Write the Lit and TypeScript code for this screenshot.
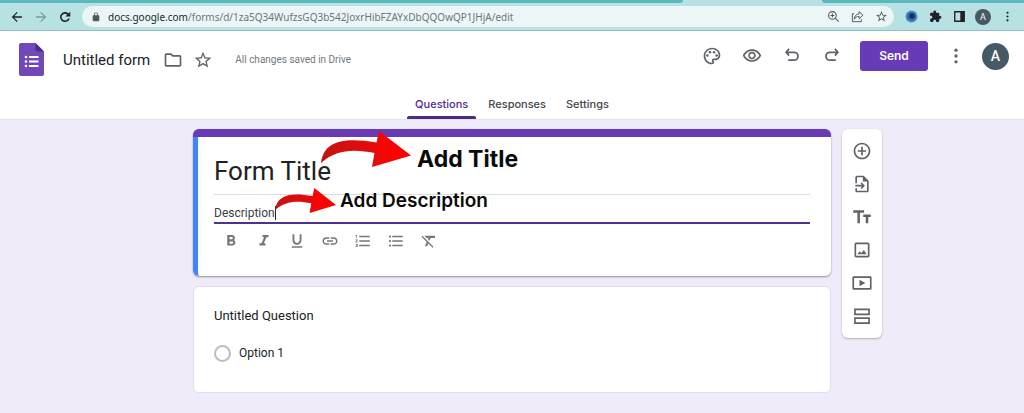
import { LitElement, html, css, svg } from "lit";
import { customElement, property } from "lit/decorators.js";

const dots = svg`<circle cx="12" cy="5" r="2"/><circle cx="12" cy="12" r="2"/><circle cx="12" cy="19" r="2"/>`;
const starPath = svg`<path d="M22 9.24l-7.19-.62L12 2 9.19 8.63 2 9.24l5.46 4.73L5.82 21 12 17.27 18.18 21l-1.63-7.03L22 9.24zM12 15.4l-3.76 2.27 1-4.28-3.32-2.88 4.38-.38L12 6.1l1.71 4.04 4.38.38-3.32 2.88 1 4.28L12 15.4z"/>`;

const glyphs: Record<string, unknown> = {
  back: svg`<path d="M20.500 10.700H7.200l5.900-5.900L11.700 3.400 3 12l8.700 8.600 1.400-1.400-5.900-5.900h13.300z"/>`,
  forward: svg`<path d="M3.500 10.900h13.300l-5.900-5.900 1.400-1.400 8.700 8.400-8.700 8.600-1.400-1.400 5.900-5.900H3.500z"/>`,
  reload: svg`<path d="M18 6A8.500 8.500 0 1 0 20.200 14.500h-2.900A5.800 5.800 0 1 1 16 8l-3.200 3.200H21V3z"/>`,
  lock: svg`<path d="M18 8h-1V6c0-2.760-2.240-5-5-5S7 3.240 7 6v2H6c-1.100 0-2 .9-2 2v10c0 1.100.9 2 2 2h12c1.100 0 2-.9 2-2V10c0-1.100-.9-2-2-2zM9 6c0-1.660 1.340-3 3-3s3 1.340 3 3v2H9V6z"/>`,
  zoom: svg`<g fill="none" stroke="currentColor" stroke-width="2"><circle cx="10" cy="10" r="7"/><path d="M15.200 15.200L21.500 21.500M10 6.500v7M6.500 10h7"/></g>`,
  share: svg`<g fill="none" stroke="currentColor" stroke-width="1.800"><path d="M6 7H2.500v14.500H19V17"/><path d="M15 3l7 6.500L15 16v-4c-4.500 0-7 1.500-9 5 .5-6 3.500-9.500 9-10z"/></g>`,
  star: starPath,
  puzzle: svg`<path d="M20.500 11H19V7c0-1.100-.9-2-2-2h-4V3.500C13 2.120 11.880 1 10.500 1S8 2.120 8 3.500V5H4c-1.100 0-1.990.9-1.990 2v3.800H3.500c1.490 0 2.700 1.210 2.700 2.700s-1.210 2.700-2.700 2.700H2V20c0 1.100.9 2 2 2h3.800v-1.500c0-1.490 1.210-2.700 2.700-2.700s2.700 1.210 2.700 2.700V22H17c1.100 0 2-.9 2-2v-4h1.500c1.380 0 2.500-1.120 2.500-2.500S21.880 11 20.500 11z"/>`,
  panel: svg`<path d="M2 2h20v20H2zM4.500 4.500v15h9v-15z" fill-rule="evenodd"/>`,
  eyeball: svg`<circle cx="12" cy="12" r="11" fill="#3f8fd0"/><circle cx="12" cy="12" r="8" fill="#2b6aa3"/><circle cx="13" cy="11" r="5" fill="#17344f"/>`,
  more: dots,
  folder: svg`<path d="M9.170 6l2 2H20v10H4V6h5.170M10 4H4c-1.100 0-1.990.9-1.990 2L2 18c0 1.100.9 2 2 2h16c1.100 0 2-.9 2-2V8c0-1.100-.9-2-2-2h-8l-2-2z"/>`,
  palette: svg`<path d="M12 22C6.490 22 2 17.510 2 12S6.490 2 12 2s10 4.040 10 9c0 3.310-2.690 6-6 6h-1.770c-.28 0-.5.22-.5.5 0 .12.05.23.13.33.41.47.64 1.060.64 1.670A2.500 2.500 0 0 1 12 22zm0-18c-4.410 0-8 3.590-8 8s3.590 8 8 8c.28 0 .5-.22.5-.5a.54.54 0 0 0-.14-.35c-.41-.46-.63-1.050-.63-1.650a2.500 2.500 0 0 1 2.500-2.500H16c2.210 0 4-1.790 4-4 0-3.860-3.590-7-8-7z"/><circle cx="6.500" cy="11.500" r="1.500"/><circle cx="9.500" cy="7.500" r="1.500"/><circle cx="14.500" cy="7.500" r="1.500"/><circle cx="17.500" cy="11.500" r="1.500"/>`,
  preview: svg`<path d="M12 6c3.790 0 7.170 2.130 8.820 5.500C19.170 14.870 15.790 17 12 17s-7.170-2.130-8.820-5.500C4.830 8.130 8.210 6 12 6m0-2C7 4 2.730 7.110 1 11.500 2.730 15.890 7 19 12 19s9.270-3.110 11-7.500C21.270 7.110 17 4 12 4zm0 5c1.380 0 2.500 1.120 2.500 2.500S13.380 14 12 14s-2.500-1.120-2.500-2.500S10.620 9 12 9m0-2c-2.480 0-4.500 2.020-4.500 4.500S9.520 16 12 16s4.500-2.020 4.500-4.500S14.480 7 12 7z"/>`,
  undo: svg`<g fill="none" stroke="currentColor" stroke-width="2.100"><path d="M8.500 3.500L5 7.500l3.500 4M5 7.500H14.500a4.700 4.700 0 0 1 0 9.500H7.500"/></g>`,
  redo: svg`<g fill="none" stroke="currentColor" stroke-width="2.100"><path d="M15.500 3.500L19 7.500l-3.500 4M19 7.500H9.500a4.700 4.700 0 0 0 0 9.500H16.500"/></g>`,
  bold: svg`<path d="M15.600 10.790c.97-.67 1.650-1.770 1.650-2.790 0-2.260-1.750-4-4-4H7v14h7.040c2.090 0 3.710-1.700 3.710-3.790 0-1.520-.86-2.820-2.150-3.420zM10 6.500h3c.83 0 1.500.67 1.500 1.500s-.67 1.500-1.500 1.500h-3v-3zm3.500 9H10v-3h3.500c.83 0 1.500.67 1.500 1.500s-.67 1.500-1.500 1.500z"/>`,
  italic: svg`<path d="M10 4v3h2.210l-3.420 8H6v3h8v-3h-2.210l3.420-8H18V4z"/>`,
  underline: svg`<path d="M12 17c3.310 0 6-2.690 6-6V3h-2.500v8c0 1.930-1.570 3.500-3.500 3.500S8.500 12.930 8.500 11V3H6v8c0 3.310 2.690 6 6 6zm-7 2v2h14v-2H5z"/>`,
  link: svg`<path d="M3.900 12c0-1.710 1.390-3.100 3.100-3.100h4V7H7c-2.760 0-5 2.240-5 5s2.240 5 5 5h4v-1.900H7c-1.710 0-3.100-1.390-3.100-3.100zM8 13h8v-2H8v2zm9-6h-4v1.900h4c1.710 0 3.100 1.390 3.100 3.100s-1.390 3.100-3.100 3.100h-4V17h4c2.760 0 5-2.240 5-5s-2.240-5-5-5z"/>`,
  numbered: svg`<path d="M2 17h2v.5H3v1h1v.5H2v1h3v-4H2v1zm1-9h1V4H2v1h1v3zm-1 3h1.800L2 13.100v.9h3v-1H3.200L5 10.900V10H2v1zm5-6v2h14V5H7zm0 14h14v-2H7v2zm0-6h14v-2H7v2z"/>`,
  bulleted: svg`<path d="M7 19h14v-2H7v2zm0-6h14v-2H7v2zm0-8v2h14V5H7z"/><circle cx="4" cy="6" r="1.500"/><circle cx="4" cy="12" r="1.500"/><circle cx="4" cy="18" r="1.500"/>`,
  clear: svg`<path d="M3.270 5L2 6.270l6.970 6.970L6.500 19h3l1.570-3.660L16.730 21 18 19.730 3.270 5zM6 5v.18L8.820 8h2.400l-.72 1.680 2.100 2.100L14.210 8H20V5H6z"/>`,
  add: svg`<path d="M13 7h-2v4H7v2h4v4h2v-4h4v-2h-4V7zm-1-5C6.480 2 2 6.480 2 12s4.480 10 10 10 10-4.480 10-10S17.520 2 12 2zm0 18c-4.410 0-8-3.590-8-8s3.590-8 8-8 8 3.590 8 8-3.590 8-8 8z"/>`,
  importer: svg`<path d="M14 2H6c-1.100 0-2 .9-2 2v7h2V4h7v5h5v11H6v-3H4v3c0 1.100.9 2 2 2h12c1.100 0 2-.9 2-2V8zM11.500 10l-1.200 1.200 1.600 1.800H4v2h7.900l-1.600 1.800 1.200 1.200 4-4z"/>`,
  text: svg`<path d="M1.500 4v3h5v12.500h3V7h5V4zM22.500 9h-9v3h3v7.500h3V12h3z"/>`,
  image: svg`<path d="M19 5v14H5V5h14m0-2H5c-1.100 0-2 .9-2 2v14c0 1.100.9 2 2 2h14c1.100 0 2-.9 2-2V5c0-1.100-.9-2-2-2z"/><path d="M6.500 17l2.600-3.600 2 2.300L14.300 12 17.500 17z"/>`,
  video: svg`<path d="M22 4H2a1.500 1.500 0 0 0-1.500 1.500v13A1.500 1.500 0 0 0 2 20h20a1.500 1.500 0 0 0 1.500-1.500v-13A1.500 1.500 0 0 0 22 4zM2.500 6h19v12h-19z" fill-rule="evenodd"/><path d="M9 8v8l7-4z"/>`,
  section: svg`<path d="M2.500 3h19v8h-19zM4.500 5v4h15V5zM2.500 13.500h19v8h-19zM4.500 15.500v4h15v-4z" fill-rule="evenodd"/>`,
};

@customElement("ui-icon")
class UiIcon extends LitElement {
  @property() name = "";
  static styles = css`
    :host { display: block; flex: none; width: 20px; height: 20px; }
    .glyph { display: block; width: 100%; height: 100%; fill: currentColor; }
  `;
  render() {
    return html`<svg class="glyph" viewBox="0 0 24 24" aria-hidden="true">${glyphs[this.name]}</svg>`;
  }
}

const button = css`
  button { font: inherit; color: inherit; background: none; border: 0; padding: 0; margin: 0; cursor: pointer; display: block; }
`;

@customElement("browser-bar")
class BrowserBar extends LitElement {
  static styles = [button, css`
    :host { display: block; background: #b7e1e3; border-bottom: 1px solid #96bfc2; color: #202124; }
    .strip { display: flex; height: 3px; background: #b7e1e3; }
    .inactive { background: #5bb9be; flex: 683; border-bottom-right-radius: 3px; }
    .active { flex: 139; }
    .rest { background: #5bb9be; flex: 202; border-bottom-left-radius: 3px; }
    .bar { display: flex; align-items: center; gap: 5px; padding: 3px 5px; }
    .group { display: flex; align-items: center; }
    .slot { width: 24px; display: grid; place-items: center; }
    .slot ui-icon { width: 13px; height: 13px; }
    .nav ui-icon { width: 14px; height: 14px; }
    .dim { color: #7d9a9c; }
    .address { flex: 1; min-width: 0; display: flex; align-items: center; height: 21px; padding: 0 1px 0 9px; border-radius: 11px; background: #ecf6f7; color: #4f5b5d; }
    .lock { width: 10px; height: 10px; }
    .url { flex: 1; min-width: 0; margin-left: 7px; white-space: nowrap; overflow: hidden; font: 10px/20px "Noto Sans", sans-serif; color: #6c7678; }
    .host { color: #202b2d; }
    .who { width: 16px; height: 16px; border-radius: 50%; background: #455a64; color: #fff; font: 9px/16px Roboto, sans-serif; text-align: center; }
  `];
  render() {
    return html`
      <div class="strip"><div class="inactive"></div><div class="active"></div><div class="rest"></div></div>
      <div class="bar">
        <div class="group nav">
          <button class="slot" aria-label="Back"><ui-icon name="back"></ui-icon></button>
          <button class="slot dim" aria-label="Forward"><ui-icon name="forward"></ui-icon></button>
          <button class="slot" aria-label="Reload"><ui-icon name="reload"></ui-icon></button>
        </div>
        <div class="address">
          <ui-icon class="lock" name="lock"></ui-icon>
          <div class="url"><span class="host">docs.google.com</span>/forms/d/1za5Q34WufzsGQ3b542JoxrHibFZAYxDbQQOwQP1JHjA/edit</div>
          <button class="slot" aria-label="Zoom"><ui-icon name="zoom"></ui-icon></button>
          <button class="slot" aria-label="Share"><ui-icon name="share"></ui-icon></button>
          <button class="slot" aria-label="Bookmark"><ui-icon name="star"></ui-icon></button>
        </div>
        <div class="group">
          <button class="slot" aria-label="Extension"><ui-icon name="eyeball"></ui-icon></button>
          <button class="slot" aria-label="Extensions"><ui-icon name="puzzle"></ui-icon></button>
          <button class="slot" aria-label="Side panel"><ui-icon name="panel"></ui-icon></button>
          <button class="slot" aria-label="Profile"><span class="who">A</span></button>
          <button class="slot" aria-label="Menu"><ui-icon name="more"></ui-icon></button>
        </div>
      </div>`;
  }
}

@customElement("form-header")
class FormHeader extends LitElement {
  static styles = [button, css`
    :host { display: block; background: #fff; color: #5f6368; border-bottom: 1px solid #e4e0ec; font-family: Roboto, sans-serif; }
    .top { display: flex; align-items: center; height: 50px; padding: 0 15px 0 19px; }
    .logo { display: block; width: 25px; height: 33px; margin-top: 6px; }
    .name { margin: 8px 13px 0 19px; font: 400 15px/24px Roboto, sans-serif; color: #202124; white-space: nowrap; }
    .mark { margin: 8px 10px 0 0; }
    .saved { flex: 1; margin: 8px 0 0 12px; font-size: 10px; line-height: 16px; color: #74787d; white-space: nowrap; }
    .actions { display: flex; align-items: center; gap: 16px; }
    .icons { display: flex; gap: 20px; }
    .send { width: 68px; height: 30px; margin: 0 2px; border-radius: 3px; background: #673ab7; color: #fff; font: 600 12px/30px Inter, sans-serif; }
    .who { width: 27px; height: 27px; border-radius: 50%; background: #455a64; color: #fff; font: 500 14px/27px Roboto, sans-serif; text-align: center; }
    .tabs { display: flex; justify-content: center; gap: 4px; padding-top: 11px; }
    .tab { padding: 0 8px; font: 500 11px/24px Inter, sans-serif; color: #44474b; }
    .tab::after { content: ""; display: block; height: 3px; margin: 0 -8px; border-radius: 2px 2px 0 0; }
    .on { color: #4f2c8f; }
    .on::after { background: #4c2a85; }
  `];
  render() {
    const icons = [["palette", "Customize theme"], ["preview", "Preview"], ["undo", "Undo"], ["redo", "Redo"]];
    return html`
      <div class="top">
        <svg class="logo" viewBox="0 0 25 33" role="img" aria-label="Forms">
          <path fill="#7248b9" d="M2 0h14.500L25 8.500V31a2 2 0 0 1-2 2H2a2 2 0 0 1-2-2V2a2 2 0 0 1 2-2z"/>
          <path fill="#4c2c8c" d="M16.500 0v6.500a2 2 0 0 0 2 2H25z"/>
          <g fill="#fff"><circle cx="7" cy="14" r="1.300"/><circle cx="7" cy="18.500" r="1.300"/><circle cx="7" cy="23" r="1.300"/><path d="M10 13h9.500v2H10zM10 17.500h9.500v2H10zM10 22h9.500v2H10z"/></g>
        </svg>
        <div class="name">Untitled form</div>
        <button class="mark" aria-label="Move to folder"><ui-icon name="folder"></ui-icon></button>
        <button class="mark" aria-label="Star"><ui-icon name="star"></ui-icon></button>
        <div class="saved">All changes saved in Drive</div>
        <div class="actions">
          <div class="icons">${icons.map(([name, label]) => html`<button aria-label=${label}><ui-icon name=${name}></ui-icon></button>`)}</div>
          <button class="send">Send</button>
          <button aria-label="More"><ui-icon name="more"></ui-icon></button>
          <button class="who" aria-label="Account">A</button>
        </div>
      </div>
      <nav class="tabs">
        <button class="tab on">Questions</button>
        <button class="tab">Responses</button>
        <button class="tab">Settings</button>
      </nav>`;
  }
}

@customElement("form-editor")
class FormEditor extends LitElement {
  static styles = [button, css`
    :host { display: grid; grid-template-columns: 1fr minmax(0, 638px) 1fr; align-items: start; padding: 9px 0 20px; font-family: Roboto, sans-serif; color: #202124; }
    .cards { grid-column: 2; display: grid; gap: 10px; }
    .card { position: relative; background: #fff; border: 1px solid #e2dcee; border-radius: 6px; }
    .heading { border: 0; border-top: 8px solid #673ab7; box-shadow: 0 1px 2px rgba(60, 50, 80, 0.5); }
    .inner { border-left: 5px solid #4285f4; border-bottom-left-radius: 6px; padding: 15px 21px 26px 16px; }
    input { font: inherit; color: inherit; border: 0; padding: 0; margin: 0; background: none; outline: none; }
    .title { display: block; width: 100%; height: 43px; font-size: 26px; border-bottom: 1px solid #dcdcdc; padding-bottom: 5px; box-sizing: border-box; }
    .description { display: flex; align-items: center; margin-top: 8px; height: 19px; border-bottom: 2px solid #4f2f8f; font-size: 12px; color: #3c4043; }
    .description input { field-sizing: content; }
    .caret { width: 1px; height: 14px; background: #202124; }
    .format { display: flex; gap: 15px; padding: 8px 0 0 8px; color: #74777b; }
    .format ui-icon { width: 18px; height: 18px; }
    .question { padding: 20px 20px 30px; }
    .ask { font-size: 13px; line-height: 18px; margin: 0; font-weight: 400; }
    .option { display: flex; align-items: center; gap: 8px; margin-top: 20px; font-size: 12px; line-height: 17px; }
    .option input { appearance: none; width: 17px; height: 17px; border: 2px solid #bdbdbd; border-radius: 50%; box-sizing: border-box; }
    .rail { justify-self: start; display: grid; gap: 13px; margin-left: 11px; padding: 12px 10px; border-radius: 6px; background: #fff; box-shadow: 0 1px 2px rgba(60, 50, 80, 0.35); color: #5f6368; }
    .note { position: absolute; font: 700 23px/24px Inter, sans-serif; color: #0a0a0a; white-space: nowrap; pointer-events: none; }
    .note-title { left: 224px; top: 10px; }
    .note-description { left: 147px; top: 52px; font-weight: 600; font-size: 19px; }
    .arrow { position: absolute; display: block; pointer-events: none; }
    .arrow-title { left: 128px; top: -6px; width: 90px; height: 36px; }
    .arrow-description { left: 82px; top: 51px; width: 61px; height: 25px; }
  `];
  arrow(kind: string) {
    return html`<svg class="arrow arrow-${kind}" viewBox="0 0 90 36" preserveAspectRatio="none" aria-hidden="true">
      <defs><linearGradient id="red"><stop offset="0" stop-color="#c41212"/><stop offset=".2" stop-color="#d21010"/><stop offset=".6" stop-color="#e60a0a"/><stop offset=".7" stop-color="#f80505"/><stop offset="1" stop-color="#fb0000"/></linearGradient></defs>
      <path fill="url(#red)" d="M0 32C3 10 22 6 55.500 11.500L58 0 90 24.500 51 36 53.500 22C34 18 15 18 0 32z"/>
    </svg>`;
  }
  render() {
    const format = ["bold", "italic", "underline", "link", "numbered", "bulleted", "clear"];
    const tools = [["add", "Add question"], ["importer", "Import questions"], ["text", "Add title and description"], ["image", "Add image"], ["video", "Add video"], ["section", "Add section"]];
    return html`
      <main class="cards">
        <section class="card heading">
          <div class="inner">
            <input class="title" aria-label="Form title" value="Form Title">
            <div class="description"><input aria-label="Form description" value="Description"><span class="caret"></span></div>
            <div class="format">${format.map((name) => html`<button aria-label=${name}><ui-icon name=${name}></ui-icon></button>`)}</div>
          </div>
          ${this.arrow("title")}${this.arrow("description")}
          <div class="note note-title">Add Title</div>
          <div class="note note-description">Add Description</div>
        </section>
        <section class="card question">
          <h2 class="ask">Untitled Question</h2>
          <div class="option"><input type="radio" id="option"><label for="option">Option 1</label></div>
        </section>
      </main>
      <aside class="rail">${tools.map(([name, label]) => html`<button aria-label=${label}><ui-icon name=${name}></ui-icon></button>`)}</aside>`;
  }
}

@customElement("app-root")
class AppRoot extends LitElement {
  static styles = css`
    :host { display: block; min-height: 100vh; background: #f0ebf8; }
  `;
  render() {
    return html`<browser-bar></browser-bar><form-header></form-header><form-editor></form-editor>`;
  }
}
